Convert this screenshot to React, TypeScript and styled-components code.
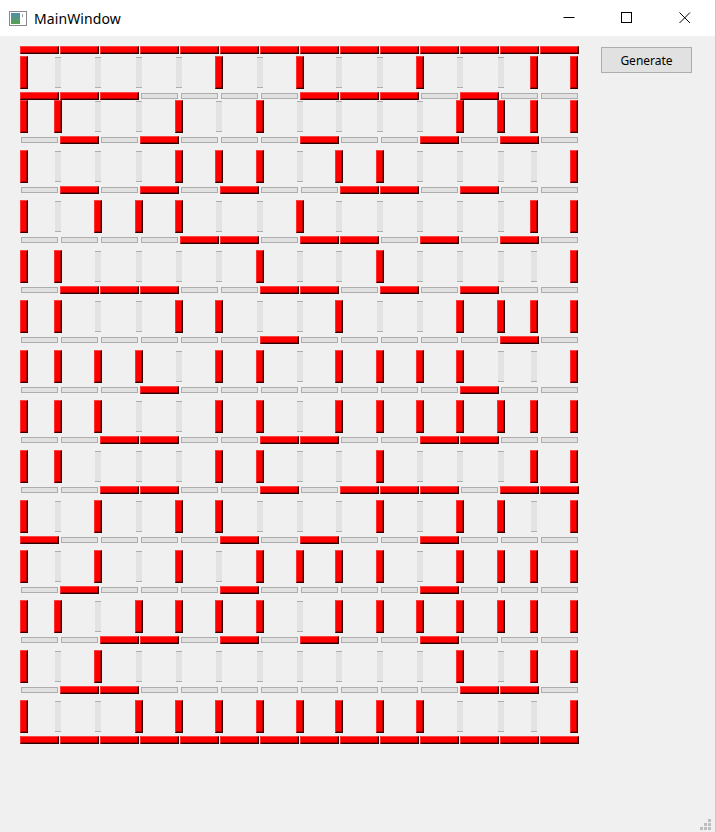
import styled, { createGlobalStyle, css } from 'styled-components';

// 1 = wall set (red), 0 = wall cleared (grey)
const hLines = [
  '11111111111111',
  '11100001110100',
  '01010001001010',
  '01010100110100',
  '00001101101010',
  '01110011010100',
  '00000010000010',
  '00010000000100',
  '00110011001100',
  '00110010111011',
  '10000101001000',
  '01000100001000',
  '00110101001000',
  '01100000000110',
  '11111111111111',
];

const vLines = [
  '100001010010011',
  '110010100001111',
  '100011101100001',
  '101110010000011',
  '110000100100001',
  '110011001001111',
  '111101101111001',
  '111001101111111',
  '110001100100011',
  '101011000101101',
  '101010111101111',
  '110111101111111',
  '101000000001011',
  '100111111110001',
];

const rowTop = (i: number) => (i === 0 ? 2 : i === 1 ? 0 : 6);

function App() {
  return (
    <>
      <GlobalStyle />
      <Window>
        <TitleBar>
          <TitleLeft>
            <AppIcon width="18" height="15" viewBox="0 0 18 15">
              <defs>
                <linearGradient id="ic" x1="0" y1="0" x2="0" y2="1">
                  <stop offset="0" stopColor="#4d8fb3" />
                  <stop offset="1" stopColor="#5aa14a" />
                </linearGradient>
              </defs>
              <rect x="0.5" y="0.5" width="17" height="14" fill="#fff" stroke="#8a8a8a" />
              <rect x="2" y="2" width="9" height="11" fill="url(#ic)" />
              <rect x="13" y="3" width="1" height="3" fill="#9a9a9a" />
            </AppIcon>
            <Title>MainWindow</Title>
          </TitleLeft>
          <Controls>
            <ControlButton aria-label="Minimize">
              <svg width="12" height="12" viewBox="0 0 12 12">
                <line x1="0.5" y1="5.5" x2="11.5" y2="5.5" stroke="#000" strokeWidth="1" />
              </svg>
            </ControlButton>
            <ControlButton aria-label="Maximize">
              <svg width="12" height="12" viewBox="0 0 12 12">
                <rect x="0.5" y="0.5" width="10" height="10" fill="none" stroke="#000" strokeWidth="1" />
              </svg>
            </ControlButton>
            <ControlButton aria-label="Close">
              <svg width="12" height="12" viewBox="0 0 12 12">
                <path d="M0.5 0.5 L11 11 M11 0.5 L0.5 11" stroke="#000" strokeWidth="1" />
              </svg>
            </ControlButton>
          </Controls>
        </TitleBar>

        <Content>
          <Maze>
            {hLines.map((h, i) => (
              <MazeBlock key={i}>
                <HRow>
                  {h.split('').map((c, j) => (
                    <HWall key={j} $on={c === '1'} />
                  ))}
                </HRow>
                {i < vLines.length && (
                  <VRow $top={rowTop(i)}>
                    {vLines[i].split('').map((c, j) => (
                      <VWall key={j} $on={c === '1'} />
                    ))}
                  </VRow>
                )}
              </MazeBlock>
            ))}
          </Maze>
          <GenerateButton>Generate</GenerateButton>
        </Content>

        <SizeGrip width="12" height="12" viewBox="0 0 12 12">
          <rect x="8" y="0" width="3" height="3" fill="#bdbdbd" />
          <rect x="4" y="4" width="3" height="3" fill="#bdbdbd" />
          <rect x="8" y="4" width="3" height="3" fill="#bdbdbd" />
          <rect x="0" y="8" width="3" height="3" fill="#bdbdbd" />
          <rect x="4" y="8" width="3" height="3" fill="#bdbdbd" />
          <rect x="8" y="8" width="3" height="3" fill="#bdbdbd" />
        </SizeGrip>
      </Window>
    </>
  );
}

const GlobalStyle = createGlobalStyle`
  html, body {
    margin: 0;
    padding: 0;
    background: #f0f0f0;
  }
  body {
    font-family: "Noto Sans", "Open Sans", sans-serif;
  }
`;

const Window = styled.div`
  position: relative;
  width: 716px;
  height: 832px;
  box-sizing: border-box;
  background: #f0f0f0;
  border-right: 1px solid #c9c9c9;
  overflow: hidden;
`;

const TitleBar = styled.div`
  height: 36px;
  background: #ffffff;
  display: flex;
  align-items: center;
  justify-content: space-between;
`;

const TitleLeft = styled.div`
  display: flex;
  align-items: center;
  padding-left: 9px;
  gap: 7px;
`;

const AppIcon = styled.svg`
  display: block;
  margin-top: 1px;
`;

const Title = styled.span`
  font-size: 14px;
  color: #000;
  letter-spacing: 0.1px;
`;

const Controls = styled.div`
  display: flex;
  height: 100%;
  margin-right: 1px;
`;

const ControlButton = styled.div`
  width: 58px;
  height: 100%;
  display: flex;
  align-items: center;
  justify-content: center;

  svg {
    display: block;
  }
`;

const Content = styled.div`
  display: flex;
  align-items: flex-start;
  padding: 10px 0 0 20px;
`;

const Maze = styled.div`
  display: flex;
  flex-direction: column;
  width: 559px;
`;

const MazeBlock = styled.div`
  display: flex;
  flex-direction: column;
`;

const HRow = styled.div`
  display: flex;
  gap: 1px;
  height: 8px;
`;

const redWall = css`
  background: #ff0000;
  border-style: solid;
  border-width: 1px;
  border-color: #ff4545 #2e0000 #2e0000 #ff3030;
  box-shadow: inset -1px -1px 0 #a80000;
`;

const HWall = styled.div<{ $on: boolean }>`
  box-sizing: border-box;
  flex: none;
  ${(p) =>
    p.$on
      ? css`
          width: 39px;
          height: 8px;
          ${redWall}
        `
      : css`
          width: 37px;
          height: 6px;
          margin: 1px;
          background: #e1e1e1;
          border: 1px solid #adadad;
        `}
`;

const VRow = styled.div<{ $top: number }>`
  display: grid;
  grid-template-columns: 34px 40px 41px 40px 40px 41px 40px 39px 41px 40px 40px 41px 33px 40px 8px;
  height: 33px;
  margin-top: ${(p) => p.$top}px;
  margin-bottom: 3px;
`;

const VWall = styled.div<{ $on: boolean }>`
  box-sizing: border-box;
  ${(p) =>
    p.$on
      ? css`
          width: 8px;
          height: 33px;
          ${redWall}
        `
      : css`
          width: 6px;
          height: 31px;
          margin: 1px;
          background: #e3e3e3;
          border-top: 1px solid #adadad;
          border-bottom: 1px solid #adadad;
        `}
`;

const GenerateButton = styled.button`
  width: 91px;
  height: 26px;
  margin: 1px 0 0 22px;
  padding: 0;
  background: #e1e1e1;
  border: 1px solid #adadad;
  border-radius: 0;
  font-family: "Noto Sans", "Open Sans", sans-serif;
  font-size: 12px;
  color: #000;
  cursor: pointer;
`;

const SizeGrip = styled.svg`
  position: absolute;
  right: 3px;
  bottom: 1px;
  display: block;
`;

export default App;
